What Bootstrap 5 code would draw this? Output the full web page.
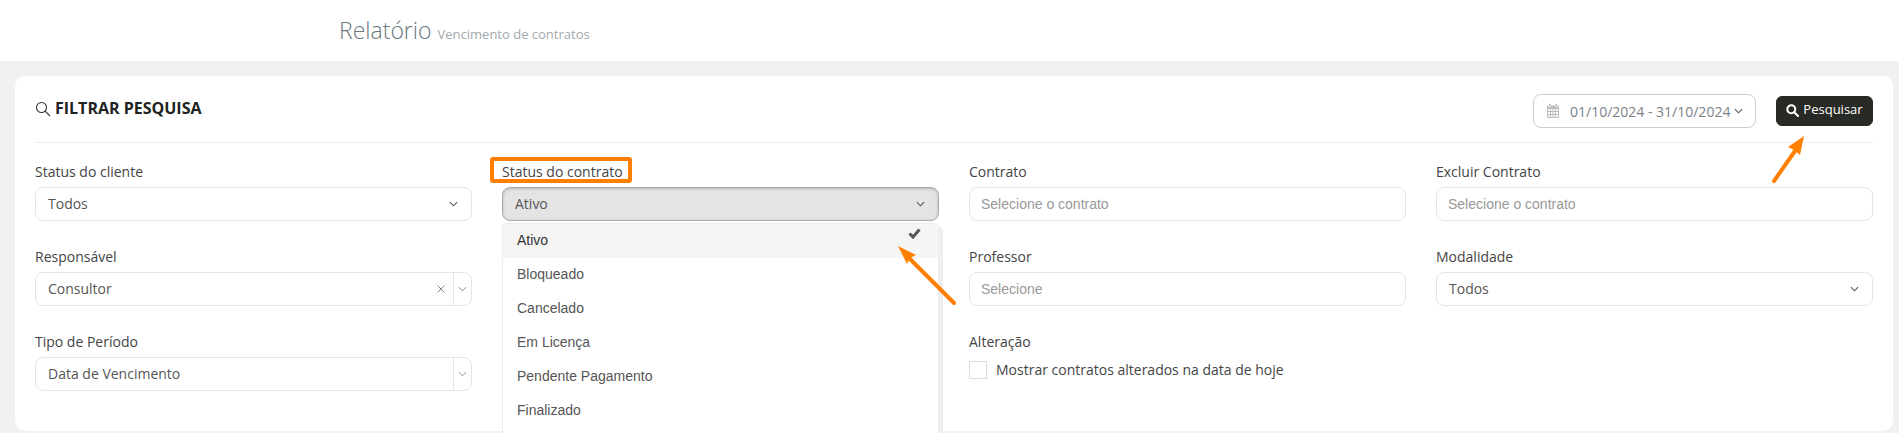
<!DOCTYPE html>
<html lang="pt-BR">
<head>
    <meta charset="UTF-8">
    <title>Relatório - Vencimento de contratos</title>
    <link href="https://cdn.jsdelivr.net/npm/bootstrap@5.3.2/dist/css/bootstrap.min.css" rel="stylesheet">
    <style>
        html, body { height: 433px; overflow: hidden; }
        body {
          background-color: #f1f1f1;
          font-family: "Open Sans", sans-serif;
          font-size: 14px;
          color: #444;
          position: relative;
        }
        .top-bar { height: 61px; background: #fff; padding-left: 339px; }
        .top-title { font-size: 23px; font-weight: 300; color: #6c777d; margin: 0; line-height: 1; }
        .top-sub { font-size: 13px; color: #a3a9ad; font-weight: 400; margin-left: 6px; }
        .page-wrap { padding: 15px 6px 0 15px; }
        .filter-card { height: 355px; border: 0; border-radius: 10px; padding: 18px 20px; }
        .filter-head { padding-bottom: 14px; border-bottom: 1px solid #eee; margin-bottom: 19px; height: 49px; }
        .filter-title { font-size: 16px; font-weight: 700; color: #222; margin: -4px 0 0; }
        .filter-icon { margin-top: -4px; }
        .date-box {
          width: 223px; height: 34px; border: 1px solid #ccc; border-radius: 8px;
          color: #7a8288; padding-left: 12px; gap: 10px; margin-right: 20px;
        }
        .date-chevron { margin-left: -6px; }
        .btn-search {
          width: 97px; height: 30px; padding: 0 0 2px; font-size: 13px; border-radius: 6px;
          background: #272a25; border-color: #272a25; color: #fff;
        }
        .filter-row { margin-left: -15px; margin-right: -15px; }
        .filter-col { position: relative; height: 85px; padding-left: 15px; padding-right: 15px; }
        .filter-label { display: block; line-height: 20px; margin-bottom: 5px; color: #444; }
        .field-sel, .field-input, .field-box {
          height: 34px; border: 1px solid #e5e5e5; border-radius: 8px; font-size: 14px; box-shadow: none;
        }
        .field-sel {
          color: #555; padding: 0 30px 2px 12px;
          font-family: "Open Sans", sans-serif;
          background-image: url("data:image/svg+xml,%3Csvg xmlns='http://www.w3.org/2000/svg' viewBox='0 0 10 6'%3E%3Cpath d='M1 1l4 4 4-4' fill='none' stroke='%23555' stroke-width='1.2'/%3E%3C/svg%3E");
          background-size: 9px 6px;
          background-position: right 13px center;
        }
        .field-input { padding: 0 11px; font-family: "Liberation Sans", Arial, sans-serif; }
        .field-input::placeholder { color: #999; }
        .field-box { background: #fff; color: #555; padding-left: 12px; }
        .field-text { margin-top: -2px; }
        .field-clear { color: #8a8a8a; margin-right: 8px; }
        .field-arrow { width: 18px; height: 100%; border-left: 1px solid #e5e5e5; }
        .field-open {
          height: 34px; background: #e4e4e4; border: 1px solid #aaa; border-radius: 8px;
          box-shadow: inset 0 1px 3px rgba(0,0,0,.2); color: #555; padding: 0 13px 0 12px;
        }
        .status-menu {
          top: 61px; left: 15px; right: 15px; width: auto; min-width: 0; padding: 0 0 30px;
          border: 1px solid #eee; border-radius: 4px 4px 0 0; box-shadow: 4px 4px 0 #eee;
          margin: 0; font-family: "Liberation Sans", Arial, sans-serif; font-size: 14px; z-index: 5;
        }
        .status-menu .dropdown-item { height: 34px; line-height: 32px; padding: 0 0 0 14px; color: #555; }
        .status-menu .dropdown-item.item-on { background: #f5f5f5; color: #333; }
        .status-check { position: absolute; top: 4px; right: 17px; }
        .check-square { width: 18px; height: 18px; border: 1px solid #ddd; background: #fff; margin-right: 9px; }
        .check-row { height: 34px; margin-top: -4px; }
        .note-layer { position: absolute; left: 0; top: 0; z-index: 10; pointer-events: none; }
    </style>
</head>
<body>

<header class="top-bar d-flex align-items-center">
    <h1 class="top-title">Relatório<span class="top-sub">Vencimento de contratos</span></h1>
</header>

<div class="page-wrap">
    <div class="card filter-card">
        <div class="filter-head d-flex align-items-center">
            <svg class="me-1 filter-icon" width="16" height="16" viewBox="0 0 16 16" fill="none" stroke="#333" stroke-width="1.1">
                <circle cx="6.5" cy="6.5" r="5"/><path d="M10.2 10.2L15 15"/>
            </svg>
            <h2 class="filter-title flex-grow-1">FILTRAR PESQUISA</h2>
            <div class="date-box d-flex align-items-center">
                <svg width="14" height="14" viewBox="0 0 14 14" fill="#bdbdbd">
                    <path d="M3 0h1.500v2H3zM9.500 0H11v2H9.500zM1 1.500h1.500v1.500h2V1.500h5v1.500h2V1.500H13V14H1zM2 5v2h2V5zm3 0v2h1.500V5zm2.500 0v2H9V5zM10 5v2h2V5zM2 8v2h2V8zm3 0v2h1.500V8zm2.500 0v2H9V8zM10 8v2h2V8zM2 11v2h2v-2zm3 0v2h1.500v-2zm2.500 0v2H9v-2zM10 11v2h2v-2z" fill-rule="evenodd"/>
                </svg>
                <span>01/10/2024 - 31/10/2024</span>
                <svg class="date-chevron" width="9" height="6" viewBox="0 0 10 6" fill="none" stroke="#555" stroke-width="1.200"><path d="M1 1l4 4 4-4"/></svg>
            </div>
            <button type="button" class="btn btn-search d-flex align-items-center justify-content-center gap-1">
                <svg width="13" height="13" viewBox="0 0 14 14" fill="none" stroke="#fff" stroke-width="2.200">
                    <circle cx="5.700" cy="5.700" r="4.300"/><path d="M8.800 8.800L13 13" stroke-linecap="round"/>
                </svg>
                Pesquisar
            </button>
        </div>

        <div class="row g-0 filter-row">
            <div class="col-3 filter-col">
                <label class="filter-label">Status do cliente</label>
                <select class="form-select field-sel"><option>Todos</option></select>
            </div>
            <div class="col-3 filter-col">
                <label class="filter-label">Status do contrato</label>
                <div class="field-open d-flex align-items-center justify-content-between">
                    <span class="field-text">Ativo</span>
                    <svg width="9" height="6" viewBox="0 0 10 6" fill="none" stroke="#555" stroke-width="1.200"><path d="M1 1l4 4 4-4"/></svg>
                </div>
                <ul class="dropdown-menu d-block status-menu list-unstyled">
                    <li class="position-relative">
                        <a class="dropdown-item item-on" href="#">Ativo</a>
                        <svg class="status-check" width="13" height="11" viewBox="0 0 13 11" fill="none" stroke="#555" stroke-width="3"><path d="M1.500 5.500L5 9l6.500-7.500"/></svg>
                    </li>
                    <li><a class="dropdown-item" href="#">Bloqueado</a></li>
                    <li><a class="dropdown-item" href="#">Cancelado</a></li>
                    <li><a class="dropdown-item" href="#">Em Licença</a></li>
                    <li><a class="dropdown-item" href="#">Pendente Pagamento</a></li>
                    <li><a class="dropdown-item" href="#">Finalizado</a></li>
                </ul>
            </div>
            <div class="col-3 filter-col">
                <label class="filter-label">Contrato</label>
                <input type="text" class="form-control field-input" placeholder="Selecione o contrato">
            </div>
            <div class="col-3 filter-col">
                <label class="filter-label">Excluir Contrato</label>
                <input type="text" class="form-control field-input" placeholder="Selecione o contrato">
            </div>

            <div class="col-3 filter-col">
                <label class="filter-label">Responsável</label>
                <div class="field-box d-flex align-items-center">
                    <span class="flex-grow-1 field-text">Consultor</span>
                    <svg class="field-clear" width="8" height="8" viewBox="0 0 8 8" fill="none" stroke="#888"><path d="M.5.500l7 7M7.500.500l-7 7"/></svg>
                    <span class="field-arrow d-flex align-items-center justify-content-center">
                        <svg width="9" height="6" viewBox="0 0 10 6" fill="none" stroke="#888" stroke-width="1.100"><path d="M1 1l4 4 4-4"/></svg>
                    </span>
                </div>
            </div>
            <div class="col-3 filter-col"></div>
            <div class="col-3 filter-col">
                <label class="filter-label">Professor</label>
                <input type="text" class="form-control field-input" placeholder="Selecione">
            </div>
            <div class="col-3 filter-col">
                <label class="filter-label">Modalidade</label>
                <select class="form-select field-sel"><option>Todos</option></select>
            </div>

            <div class="col-3 filter-col">
                <label class="filter-label">Tipo de Período</label>
                <div class="field-box d-flex align-items-center">
                    <span class="flex-grow-1 field-text">Data de Vencimento</span>
                    <span class="field-arrow d-flex align-items-center justify-content-center">
                        <svg width="9" height="6" viewBox="0 0 10 6" fill="none" stroke="#888" stroke-width="1.100"><path d="M1 1l4 4 4-4"/></svg>
                    </span>
                </div>
            </div>
            <div class="col-3 filter-col"></div>
            <div class="col-3 filter-col">
                <label class="filter-label">Alteração</label>
                <div class="check-row d-flex align-items-center">
                    <span class="check-square"></span>
                    <span class="field-text">Mostrar contratos alterados na data de hoje</span>
                </div>
            </div>
        </div>
    </div>
</div>

<!-- annotations drawn over the screenshot -->
<svg class="note-layer" width="1899" height="433" viewBox="0 0 1899 433">
    <rect x="492" y="159" width="138" height="22" rx="1" fill="none" stroke="#ff8000" stroke-width="4"/>
    <path d="M909 258L954 303" stroke="#ff8000" stroke-width="4" stroke-linecap="round"/>
    <path d="M898 246L916 255L910 258L907 264Z" fill="#ff8000"/>
    <path d="M1795 151L1774 181" stroke="#ff8000" stroke-width="4" stroke-linecap="round"/>
    <path d="M1804 136L1800 155L1794 150L1788 147Z" fill="#ff8000"/>
</svg>

<script src="https://cdn.jsdelivr.net/npm/bootstrap@5.3.2/dist/js/bootstrap.bundle.min.js"></script>
</body>
</html>
